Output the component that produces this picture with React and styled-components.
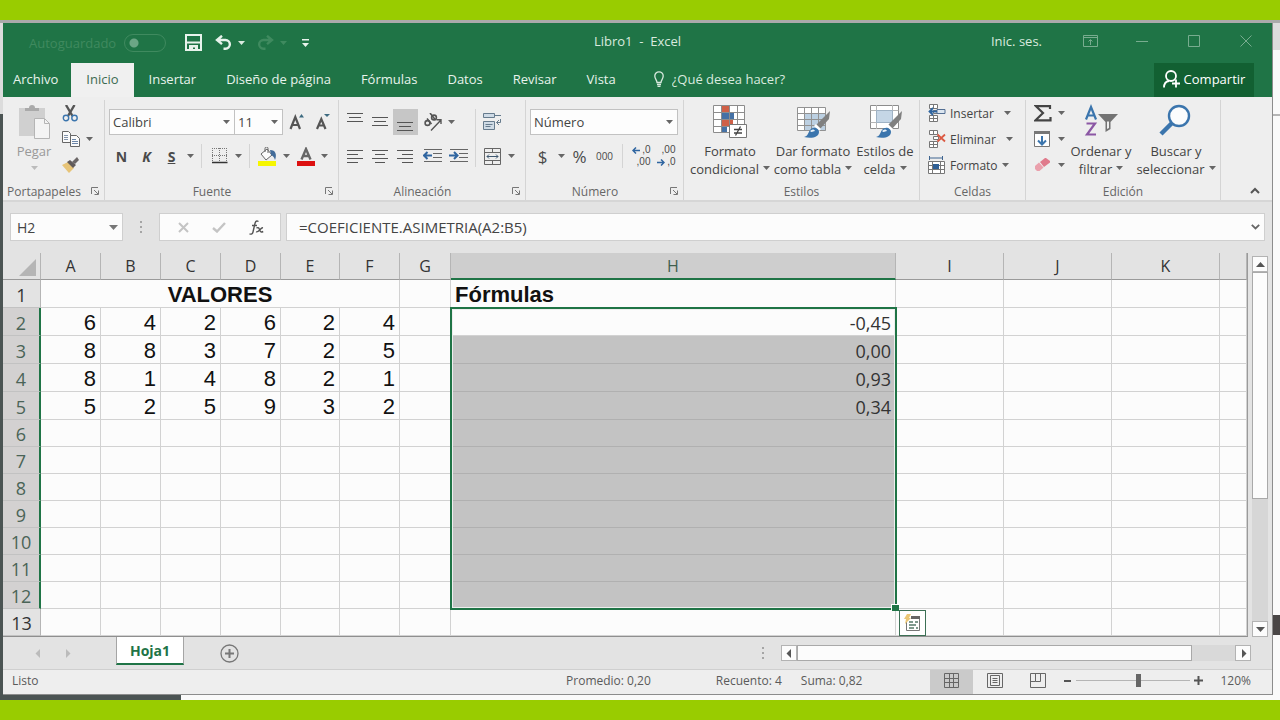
import React, { useState } from "react";
import styled, { createGlobalStyle, css } from "styled-components";

const ui = `"Open Sans", "Noto Sans", sans-serif`;
const green = "#1f7446";
const ink = "#4a4a4a";
const blue = "#3b75ad";

const GlobalStyle = createGlobalStyle`
  * {
    box-sizing: border-box;
  }
  body {
    margin: 0;
    font-family: ${ui};
    font-size: 12px;
    color: #444;
  }
  button, input, select {
    font: inherit;
    color: inherit;
    margin: 0;
    padding: 0;
    border: 0;
    border-radius: 0;
    background: transparent;
    outline: none;
  }
  svg {
    display: block;
    flex: none;
  }
`;

const Screen = styled.div`
  min-height: 100vh;
  display: flex;
  flex-direction: column;
`;
const LimeBar = styled.div`
  height: 20px;
  background: #99cc00;
`;
const Desktop = styled.div`
  flex: 1;
  display: flex;
  padding: 3px 7px 5px 3px;
  background:
    linear-gradient(#4a4646, #4a4646) 100% 595px / 7px 20px no-repeat,
    linear-gradient(#b5b5b5, #b5b5b5) 100% 94px / 7px 2px no-repeat,
    linear-gradient(#aaa, #aaa) 0 0 / 100% 3px no-repeat,
    linear-gradient(#dcdcdc, #dcdcdc) 0 0 / 3px 94px no-repeat,
    linear-gradient(#dcdcdc, #dcdcdc) 100% 0 / 7px 30px no-repeat,
    linear-gradient(#4b5453, #4b5453) 0 0 / 3px 100% no-repeat,
    linear-gradient(#4b5453, #4b5453) 0 100% / 181px 6px no-repeat,
    #fafafa;
`;
const Window = styled.div`
  flex: 1;
  min-width: 0;
  display: flex;
  flex-direction: column;
  background: #e3e3e3;
  border-right: 1px solid #8c8c8c;
  border-bottom: 1px solid #8c8c8c;
`;

/* title bar */
const TitleBar = styled.header`
  display: grid;
  grid-template-columns: 1fr auto 1fr;
  align-items: center;
  height: 40px;
  padding-bottom: 4px;
  background: ${green};
  color: #d9eadf;
  font-size: 13px;
`;
const QuickAccess = styled.div`
  display: flex;
  align-items: center;
  gap: 6px;
  padding: 3px 0 0 26px;
`;
const QuickPair = styled.div`
  display: flex;
`;
const AutoSave = styled.label`
  display: flex;
  align-items: center;
  gap: 8px;
  margin-right: 9px;
  color: #3f8a5f;
`;
const Toggle = styled.input`
  appearance: none;
  width: 42px;
  height: 18px;
  border: 1px solid #3f8a5f;
  border-radius: 9px;
  background: radial-gradient(circle at 9px 8px, #6ba685 4px, transparent 5px);
`;
const QuickButton = styled.button`
  display: flex;
  align-items: center;
  justify-content: center;
  width: ${(p) => p.$w || 24}px;
  height: 24px;
  color: ${(p) => (p.$dim ? "#3f8a5f" : "#e8f3ec")};
`;
const WindowControls = styled.div`
  display: flex;
  align-items: center;
  justify-content: flex-end;
  color: #78ac8f;
`;
const SignIn = styled.button`
  margin-right: 22px;
  color: #d9eadf;
`;
const WindowButton = styled.button`
  display: flex;
  justify-content: center;
  width: 52px;
`;

/* ribbon tabs */
const TabBar = styled.nav`
  display: flex;
  align-items: stretch;
  height: 34px;
  padding-right: 18px;
  background: ${green};
  color: #e8f3ec;
  font-size: 13px;
`;
const Tab = styled.button`
  padding: ${(p) => (p.$file ? "0 13px 2px 10px" : "0 15px 2px")};
  ${(p) =>
    p.$active &&
    css`
      background: #f0f0f0;
      color: #3d6a50;
    `}
`;
const TellMe = styled.label`
  display: flex;
  align-items: center;
  gap: 8px;
  flex: 1;
  padding: 0 0 2px 23px;
  input {
    width: 160px;
  }
  input::placeholder {
    color: #d9eadf;
    opacity: 1;
  }
`;
const ShareButton = styled.button`
  display: flex;
  align-items: center;
  justify-content: center;
  gap: 4px;
  width: 100px;
  padding-bottom: 2px;
  background: #126032;
  color: #fff;
`;

/* ribbon */
const RibbonBar = styled.section`
  display: flex;
  height: 105px;
  padding-top: 3px;
  background: #eee;
  border-bottom: 2px solid #d6d6d6;
`;
const Group = styled.div`
  display: flex;
  flex-direction: column;
  width: ${(p) => p.$w}px;
  border-right: 1px solid #d4d4d4;
`;
const GroupBody = styled.div`
  flex: 1;
  display: flex;
  padding: ${(p) => (p.$tall ? "0 3px" : "9px 4px 0 4px")};
`;
const GroupLabel = styled.div`
  display: grid;
  grid-template-columns: ${(p) => (p.$launcher ? "1fr auto" : "1fr")};
  column-gap: 10px;
  align-items: center;
  justify-items: center;
  height: 18px;
  padding: 0 4px;
  color: #666;
`;
const Rows = styled.div`
  display: flex;
  flex-direction: column;
  gap: ${(p) => (p.$tight ? 0 : 8)}px;
`;
const Row = styled.div`
  display: flex;
  align-items: center;
  height: 26px;
`;
const ToolButton = styled.button`
  display: flex;
  align-items: center;
  justify-content: center;
  flex: none;
  width: ${(p) => p.$w || 25}px;
  height: 26px;
  color: ${ink};
  font-size: ${(p) => p.$size || 14}px;
  font-weight: ${(p) => (p.$bold ? 700 : 400)};
  font-style: ${(p) => (p.$italic ? "italic" : "normal")};
  text-decoration: ${(p) => (p.$underline ? "underline" : "none")};
  background: ${(p) => (p.$on ? "#c6c6c6" : "transparent")};
`;
const Divider = styled.div`
  width: 1px;
  height: ${(p) => p.$h || 24}px;
  margin: 0 ${(p) => p.$gap || 5}px;
  background: #d4d4d4;
`;
const Combo = styled.div`
  display: flex;
  align-items: center;
  width: ${(p) => p.$w}px;
  height: 26px;
  padding-right: 4px;
  margin-right: ${(p) => p.$join || 0}px;
  background: #fdfdfd;
  border: 1px solid #c2c2c2;
  select {
    appearance: none;
    flex: 1;
    min-width: 0;
    height: 24px;
    padding-left: 3px;
    font-size: 13px;
  }
`;
const BigButton = styled.button`
  display: flex;
  flex-direction: column;
  align-items: center;
  flex: none;
  width: ${(p) => p.$w}px;
  padding-top: 4px;
  font-size: 13px;
  line-height: 18px;
  color: ${(p) => (p.$dim ? "#999" : "#444")};
  svg:first-child {
    margin-bottom: 3px;
  }
  span {
    display: flex;
    align-items: center;
    justify-content: center;
    gap: 4px;
    min-height: 18px;
    white-space: nowrap;
  }
`;
const CellButton = styled.button`
  display: flex;
  align-items: center;
  gap: 4px;
  height: 26px;
  padding-left: 5px;
  svg:last-child {
    margin-left: ${(p) => p.$caret || 0}px;
  }
`;
const Collapse = styled.button`
  align-self: flex-end;
  margin: 0 12px 6px auto;
`;

/* formula bar */
const FormulaBar = styled.section`
  display: flex;
  height: 28px;
  margin: 11px 7px 12px 7px;
`;
const Box = styled.div`
  display: flex;
  align-items: center;
  flex: ${(p) => (p.$w ? "none" : 1)};
  width: ${(p) => (p.$w ? p.$w + "px" : "auto")};
  padding: 0 4px 0 6px;
  margin-right: ${(p) => p.$gap || 0}px;
  background: #fcfcfc;
  border: 1px solid #cfcfcf;
  justify-content: ${(p) => (p.$spread ? "space-around" : "flex-start")};
`;
const NameInput = styled.input`
  flex: 1;
  min-width: 0;
  font-size: 14px;
`;
const FormulaInput = styled.input`
  flex: 1;
  min-width: 0;
  padding-left: 6px;
  font-size: 15px;
`;
const Dots = styled.div`
  display: flex;
  align-items: center;
  justify-content: center;
  width: ${(p) => p.$w}px;
`;

/* sheet */
const SheetArea = styled.main`
  display: flex;
  align-items: stretch;
`;
const Sheet = styled.div`
  flex: 1;
  min-width: 0;
  border-right: 1px solid #9a9a9a;
  border-bottom: 1px solid #8f8f8f;
  overflow: hidden;
`;
const Grid = styled.table`
  width: 100%;
  table-layout: fixed;
  border-collapse: separate;
  border-spacing: 0;
  background: #fcfcfc;
`;
const ColHead = styled.th`
  height: 27px;
  padding: 0;
  font-size: 16px;
  line-height: 24px;
  font-weight: 400;
  color: ${(p) => (p.$on ? "#3f5f4e" : "#333")};
  background: ${(p) => (p.$on ? "#cecece" : "#e3e3e3")};
  border-right: 1px solid #b5b5b5;
  border-bottom: ${(p) => (p.$on ? "2px solid " + green : "1px solid #9a9a9a")};
  svg {
    margin: 2px 4px 0 auto;
  }
`;
const RowHead = styled.th`
  height: ${(p) => p.$h}px;
  padding: 2px 0 0;
  font-size: 18px;
  line-height: 24px;
  font-weight: 400;
  color: ${(p) => (p.$on ? "#4a6457" : "#333")};
  background: ${(p) => (p.$on ? "#d3d1d1" : "#e3e3e3")};
  border-right: ${(p) => (p.$on ? "2px solid " + green : "1px solid #b5b5b5")};
  border-bottom: 1px solid #c2c2c2;
`;
const Cell = styled.td`
  position: ${(p) => (p.$anchor ? "relative" : "static")};
  padding: 2px 4px 0;
  font-family: "Liberation Sans", Arial, sans-serif;
  font-size: 22px;
  line-height: 24px;
  color: #111;
  text-align: right;
  border-right: 1px solid #d2d2d2;
  border-bottom: 1px solid #d2d2d2;
  ${(p) =>
    p.$title &&
    css`
      font-weight: 700;
      text-align: ${p.$title};
    `}
  ${(p) =>
    p.$result &&
    css`
      font-family: ${ui};
      font-size: 18px;
      color: #333;
      padding: 2px 4px 0 0;
    `}
  ${(p) =>
    p.$shade &&
    css`
      background: #c3c3c3;
      border-bottom-color: #b0b0b0;
    `}
`;
const Selection = styled.div`
  position: absolute;
  z-index: 1;
  top: -1px;
  left: -1px;
  right: -2px;
  height: 303px;
  border: 2px solid ${green};
  box-shadow: inset 0 0 0 1px #eee;
  pointer-events: none;
  &::after {
    content: "";
    position: absolute;
    right: -4px;
    bottom: -3px;
    width: 7px;
    height: 6px;
    background: ${green};
    border: 1px solid #fff;
    border-width: 1px 0 0 1px;
  }
`;
const QuickAnalysis = styled.button`
  position: absolute;
  z-index: 2;
  left: 3px;
  top: 1px;
  display: flex;
  align-items: center;
  justify-content: center;
  width: 27px;
  height: 26px;
  background: #fff;
  border: 1px solid #3c7055;
`;
const VScroll = styled.div`
  display: flex;
  flex-direction: column;
  width: 16px;
  margin: 3px 4px 0;
  background: #d6d6d6;
`;
const ScrollButton = styled.button`
  display: flex;
  align-items: center;
  justify-content: center;
  width: 16px;
  height: 16px;
  background: #fcfcfc;
  border: 1px solid #b3b3b3;
`;
const VThumb = styled.div`
  flex: 227;
  background: #fcfcfc;
  border: 1px solid #a9a9a9;
`;
const Track = styled.div`
  flex: ${(p) => p.$grow};
`;

/* sheet tabs and status */
const SheetTabs = styled.div`
  display: flex;
  align-items: center;
  height: 32px;
`;
const SheetNav = styled.div`
  display: flex;
  align-items: center;
  justify-content: space-between;
  width: 38px;
  margin: 0 44px 0 31px;
`;
const SheetTab = styled.button`
  align-self: flex-start;
  width: 68px;
  height: 28px;
  font-size: 14px;
  font-weight: 700;
  color: #217346;
  background: #fff;
  border: 1px solid #a5a5a5;
  border-top: 0;
  border-bottom: 2px solid ${green};
`;
const AddSheet = styled.button`
  margin: 0 auto 0 36px;
`;
const HScroll = styled.div`
  display: flex;
  width: 37%;
  height: 16px;
  margin-right: 21px;
  background: #d9d9d9;
`;
const HThumb = styled.div`
  flex: 392;
  background: #fcfcfc;
  border: 1px solid #a9a9a9;
`;
const StatusBar = styled.footer`
  display: flex;
  flex: 1;
  align-items: center;
  min-height: 25px;
  padding: 0 21px 0 9px;
  background: #eee;
  border-top: 1px solid #cfcfcf;
  color: #5a5a5a;
  > span,
  > div:not(:last-of-type) > span {
    padding-bottom: 3px;
  }
`;
const Stats = styled.div`
  display: flex;
  gap: ${(p) => p.$gap}px;
  margin-left: ${(p) => (p.$push ? "auto" : "19px")};
`;
const Views = styled.div`
  display: flex;
  align-self: stretch;
  margin-left: 68px;
`;
const ViewButton = styled.button`
  display: flex;
  align-items: center;
  justify-content: center;
  width: 43px;
  padding-bottom: 3px;
  background: ${(p) => (p.$on ? "#cacaca" : "transparent")};
`;
const ZoomControl = styled.div`
  display: flex;
  align-items: center;
  gap: 4px;
  margin: 0 17px 0 5px;
  padding-bottom: 3px;
`;
const ZoomSlider = styled.input`
  appearance: none;
  width: 114px;
  height: 14px;
  background: linear-gradient(#b5b5b5, #b5b5b5) center / 100% 1px no-repeat;
  &::-webkit-slider-thumb {
    appearance: none;
    width: 5px;
    height: 13px;
    background: #666;
  }
`;

const Caret = ({ color = "#666" }) => (
  <svg width="7" height="4" viewBox="0 0 7 4">
    <path d="M0 0h7L3.500 4z" fill={color} />
  </svg>
);
const Arrow = ({ dir, color = "#555" }) => {
  const shapes = {
    up: "M0 7L4.500 2 9 7z",
    down: "M0 2h9L4.500 7z",
    left: "M6 0v9L1.500 4.500z",
    right: "M3 0v9L7.500 4.500z",
  };
  return (
    <svg width="9" height="9" viewBox="0 0 9 9">
      <path d={shapes[dir]} fill={color} />
    </svg>
  );
};
const Launcher = ({ label }) => (
  <button aria-label={label}>
    <svg width="9" height="9" viewBox="0 0 9 9" fill="none" stroke="#777">
      <path d="M.5 7V.5H7M3 3l4 4M7.500 3.500v4h-4" />
    </svg>
  </button>
);
const Lines = ({ rows, color = "#555" }) => (
  <svg width="17" height="18" viewBox="0 0 17 18" stroke={color}>
    {rows.map(([x, y, w]) => (
      <path key={y} d={`M${x} ${y + 0.5}h${w}`} />
    ))}
  </svg>
);
const alignIcons = {
  top: [[0, 0, 16], [2, 4, 12], [0, 8, 16]],
  middle: [[0, 4, 16], [2, 8, 12], [0, 12, 16]],
  bottom: [[0, 9, 16], [2, 13, 12], [0, 17, 16]],
  left: [[0, 3, 16], [0, 7, 11], [0, 11, 16], [0, 15, 11]],
  center: [[0, 3, 16], [3, 7, 10], [0, 11, 16], [3, 15, 10]],
  right: [[0, 3, 16], [5, 7, 11], [0, 11, 16], [5, 15, 11]],
};

const SaveIcon = () => (
  <svg width="17" height="17" viewBox="0 0 17 17" fill="none" stroke="currentColor" strokeWidth="2">
    <path d="M1 1h15v15H1zM2 8.500h13" />
    <path d="M4 11h9v5h-3v-2.500H8V16H4z" fill="currentColor" stroke="none" />
  </svg>
);
const UndoIcon = ({ flip }) => (
  <svg width="17" height="15" viewBox="0 0 17 15" fill="none" stroke="currentColor" strokeWidth="2.400">
    <g transform={flip ? "matrix(-1 0 0 1 17 0)" : undefined}>
      <path d="M7 .8L2 5l5 4.200M2 5h8.500a4.300 4.300 0 0 1 0 8.700H8.500" />
    </g>
  </svg>
);
const PasteIcon = () => (
  <svg width="34" height="35" viewBox="0 0 34 35">
    <rect x="2" y="4" width="26" height="28" fill="#d0d0d0" />
    <path d="M8 7V4h4a3 3 0 0 1 6 0h4v3z" fill="#aaa" />
    <path d="M17.500 14.500h10l5 5v15h-15z" fill="#f4f4f4" stroke="#b5b5b5" />
    <path d="M27.500 14.500v5h5" fill="none" stroke="#b5b5b5" />
  </svg>
);
const CutIcon = () => (
  <svg width="17" height="17" viewBox="0 0 17 17" fill="none">
    <path d="M4 0l6.500 11M12.500 0L6 11" stroke="#555" strokeWidth="2.400" />
    <circle cx="4" cy="13" r="2.700" stroke={blue} strokeWidth="1.400" />
    <circle cx="12.500" cy="13" r="2.700" stroke={blue} strokeWidth="1.400" />
  </svg>
);
const CopyIcon = () => (
  <svg width="18" height="16" viewBox="0 0 18 16" fill="#fafafa" stroke="#666">
    <path d="M.5.5h6l2 2v9h-8z" />
    <path d="M2 4.500h4M2 6.500h4M2 8.500h4" stroke="#8293aa" />
    <path d="M8.500 4.500h6l3 3v8h-9z" />
    <path d="M10 8.500h4M10 10.500h6M10 12.500h6" stroke="#6c86a8" />
  </svg>
);
const BrushIcon = () => (
  <svg width="18" height="16" viewBox="0 0 18 16">
    <path d="M0 8l6-3 6 6-5 5z" fill="#e7c478" />
    <path d="M5 5l3-2 6 5-3 3z" fill="#615b5b" />
    <path d="M10 5l5-5 2 3-4 4z" fill="#6b6666" />
  </svg>
);
const GrowFont = ({ down }) => (
  <svg width="16" height="18" viewBox="0 0 16 18">
    <path
      d={down ? "M2 16L6.300 6 10.500 16M3.500 12.500H9" : "M1.500 16L6.300 4 11 16M3 12H9.500"}
      fill="none"
      stroke="#555"
      strokeWidth="2.200"
    />
    <path d={down ? "M9 1h6l-3 3z" : "M10 4.500h5L12.500 1z"} fill="#3d6a80" />
  </svg>
);
const BordersIcon = () => (
  <svg width="16" height="16" viewBox="0 0 16 16" fill="none" stroke="#777">
    <path d="M.5 0v14M7.500 0v14M14.500 0v14M0 .5h15M0 7.500h15" strokeDasharray="1 1" />
    <path d="M0 14.500h15.500" stroke="#333" strokeWidth="1.500" />
  </svg>
);
const FillIcon = () => (
  <svg width="19" height="19" viewBox="0 0 19 19">
    <path d="M3 7l6-5 5 6-6 5z" fill="#fbfbfb" stroke="#666" />
    <path d="M7 5V1.500a1.500 1.500 0 0 1 3 0V6" fill="none" stroke="#666" />
    <path d="M12 3c6 0 7 5 5 10-1-3-2-4-4-5z" fill="#426b99" />
    <path d="M0 14h18v5H0z" fill="#f6f600" />
  </svg>
);
const FontColorIcon = () => (
  <svg width="18" height="19" viewBox="0 0 18 19">
    <path d="M4.500 12.500L9 2l4.500 10.500M6 9h6" fill="none" stroke="#666" strokeWidth="2.400" />
    <path d="M0 14h18v5H0z" fill="#dc1010" />
  </svg>
);
const OrientationIcon = () => (
  <svg width="20" height="18" viewBox="0 0 20 18" fill="none" stroke="#555" strokeWidth="1.600">
    <circle cx="4.500" cy="10" r="2.400" />
    <path d="M4 5.500l4.500 5.500M7 0l5.500 7" />
    <circle cx="11" cy="4.500" r="2.400" />
    <path d="M8 17.500L18 7M13.500 6.800H18V11" strokeWidth="1.400" />
  </svg>
);
const IndentIcon = ({ right }) => (
  <svg width="19" height="16" viewBox="0 0 19 16" fill="none">
    <path d="M1 1.500h18M10 5.500h9M10 9.500h9M1 13.500h18" stroke="#666" />
    <path
      d={right ? "M0 7.500h8M5 4l3.500 3.500L5 11" : "M9 7.500H1M4.500 4L1 7.500 4.500 11"}
      stroke="#2f65a0"
      strokeWidth="2"
    />
  </svg>
);
const WrapIcon = () => (
  <svg width="19" height="18" viewBox="0 0 19 18" fill="#cfdbe6" stroke="#667b8d">
    <path d="M.5.5h11v4H.5zM.5 8.500h11v8H.5z" />
    <path d="M2.500 11.500h7M2.500 13.500h5M12 2.500h6M17.500 6v3.500h-4M16 7l-2.500 2.500L16 12" fill="none" />
  </svg>
);
const MergeIcon = () => (
  <svg width="17" height="17" viewBox="0 0 17 17" fill="none" stroke="#666">
    <path d="M.5.5h16v16H.5zM.5 4.500h16M.5 12.500h16M8.500 0v4M8.500 13v4" />
    <path d="M3 8.500h11M5 6.500l-2 2 2 2M12 6.500l2 2-2 2" stroke="#3f5870" />
  </svg>
);
const Decimals = styled.span`
  display: flex;
  flex-direction: column;
  align-items: flex-end;
  width: 20px;
  font-family: "Liberation Sans", Arial, sans-serif;
  font-size: 10px;
  line-height: 12px;
  span {
    display: flex;
    align-items: center;
    gap: 2px;
  }
`;
const SmallArrow = ({ right }) => (
  <svg width="8" height="7" viewBox="0 0 8 7" fill="none" stroke="#2f65a0" strokeWidth="1.500">
    <path d={right ? "M0 3.500h7M4 .5l3 3-3 3" : "M8 3.500H1M4 .5l-3 3 3 3"} />
  </svg>
);
const TableBase = ({ children }) => (
  <svg width="35" height="35" viewBox="0 0 35 35">
    {children}
  </svg>
);
const CondIcon = () => (
  <TableBase>
    <path d="M.5 1.500h31v27H.5z" fill="#fff" />
    <path d="M9 1h7v7H9zM9 16h11v6H9z" fill="#cf6047" />
    <path d="M9 8h12v7H9zM9 22h5v7H9z" fill="#4571a5" />
    <path d="M.5 1.500h31v27H.5zM.5 8.500h31M.5 15.500h31M.5 22.500h31M8.500 1v28M16.500 1v28M24.500 1v28" fill="none" stroke="#8c8c8c" />
    <path d="M16.500 20.500h17v13h-17z" fill="#fff" stroke="#777" />
    <path d="M21 25.500h8M21 29h8M27.500 22.500l-5 9" stroke="#444" strokeWidth="1.300" />
  </TableBase>
);
const PaintBrush = () => (
  <>
    <path d="M34 7l-1 8-9 10-4-4z" fill="#808080" />
    <path d="M20 20l5 5-2 2-5-5z" fill="#fff" />
    <path d="M8 33c4-1 4-4 6-7 3-4 9-2 9 2 0 5-7 7-15 5z" fill="#3b75ad" />
    <path d="M14 27c2-2 4-2 5 0-2 0-3 2-5 0z" fill="#e9f1f8" />
  </>
);
const TableIcon = () => (
  <TableBase>
    <path d="M1.500 3.500h28v23h-28z" fill="#fff" />
    <path d="M8 9h22v18H8z" fill="#bcd0e2" />
    <path d="M1.500 3.500h28v23h-28zM1.500 9.500h28M1.500 15.500h28M1.500 21.500h28M8.500 3v24M15.500 3v24M22.500 3v24" fill="none" stroke="#929292" />
    <PaintBrush />
  </TableBase>
);
const StylesIcon = () => (
  <TableBase>
    <path d="M2.500 1.500h28v23h-28z" fill="#fff" stroke="#8c8c8c" />
    <path d="M2.500 6.500h28M2.500 18.500h28M8.500 1v24M24.500 1v24" stroke="#b5b5b5" />
    <path d="M8.500 6.500h16v12h-16z" fill="#c5d6e6" stroke="#9fb2c4" />
    <PaintBrush />
  </TableBase>
);
const CellsIcon = ({ kind }) => (
  <svg width="18" height="18" viewBox="0 0 18 18" fill="none" stroke="#777">
    {kind === "format" ? (
      <>
        <path d="M.5 5.500h16v12H.5zM.5 9.500h16M.5 13.500h16M4.500 5v13M12.500 5v13" fill="#fff" />
        <path d="M1.500 0v4M14.500 0v4M2 2h12" stroke="#3f6590" />
        <path d="M5 8h6v5H5z" fill="#2f5f95" stroke="none" />
      </>
    ) : (
      <path d="M1.500.5h8v4h-8zM5.500 0v4M1.500 11.500h8v6h-8zM5.500 11v6M5.500 6.500h5v3h-5zM1.500 14.500h8" fill="#fff" />
    )}
    {kind === "insert" && (
      <>
        <path d="M9 5.500h8v4H9z" fill="#dce6f0" stroke="#536f93" />
        <path d="M9 7.500H1.500M5 4L1.500 7.500 5 11" stroke="#2f65a0" strokeWidth="1.800" />
      </>
    )}
    {kind === "delete" && <path d="M9.500 4.500l7.500 7M17 4.500l-7.500 7" stroke="#db5a43" strokeWidth="1.800" />}
  </svg>
);
const SigmaIcon = () => (
  <svg width="18" height="17" viewBox="0 0 18 17" fill="none" stroke="#444" strokeWidth="2.200">
    <path d="M16 4V1.200H2L9 8l-7.500 7.300H16.500V12" />
  </svg>
);
const FillDownIcon = () => (
  <svg width="17" height="17" viewBox="0 0 17 17" fill="none">
    <path d="M.5.5h15v15H.5z" fill="#fff" stroke="#777" />
    <path d="M0 0h16v3H0z" fill="#777" />
    <path d="M8 5v8M4 9.500L8 13.500l4-4" stroke={blue} strokeWidth="2" />
  </svg>
);
const EraserIcon = () => (
  <svg width="15" height="14" viewBox="0 0 15 14">
    <path d="M0 8l4-3.500 4.500 5L4.500 13H2L0 11z" fill="#eaa0ac" />
    <path d="M5 4l5-4h1l4 3v1.500L9 9z" fill="#e07a8c" />
  </svg>
);
const SortIcon = () => (
  <svg width="35" height="35" viewBox="0 0 35 35" fill="none">
    <path d="M2 15.500L7 3l5 12.500M3.800 11.500h6.400" stroke={blue} strokeWidth="2.200" />
    <path d="M2.500 19.500h8.500L3 30.500h9" stroke="#8b57a4" strokeWidth="2.200" />
    <path d="M14 10h20l-7.500 8v7l-5 3V18z" fill="#737373" />
    <path d="M23 17.500h2V24l-2 1z" fill="#eee" />
  </svg>
);
const SearchIcon = () => (
  <svg width="35" height="35" viewBox="0 0 35 35" fill="none" stroke={blue}>
    <circle cx="20" cy="12" r="10" fill="#fbfcfd" strokeWidth="2.400" />
    <path d="M12.500 19.500L2 30" strokeWidth="4.500" />
  </svg>
);
const PersonIcon = () => (
  <svg width="17" height="18" viewBox="0 0 17 18" fill="none" stroke="#fff" strokeWidth="1.800">
    <circle cx="8" cy="6" r="5" />
    <path d="M1 17.500c0-4 2-6 5-6.500M9 13.500h8M13 9.500v8" />
  </svg>
);
const BulbIcon = () => (
  <svg width="10" height="16" viewBox="0 0 10 16" fill="none" stroke="#d9eadf" strokeWidth="1.300">
    <path d="M3 11.500C3 9 .8 8 .8 5a4.200 4.200 0 0 1 8.400 0C9.200 8 7 9 7 11.500zM3 13.500h4M3.500 15.300h3" />
  </svg>
);

const columns = [
  ["A", 60],
  ["B", 60],
  ["C", 60],
  ["D", 60],
  ["E", 59],
  ["F", 60],
  ["G", 51],
  ["H", 445],
  ["I", 108],
  ["J", 108],
  ["K", 108],
];
const values = {
  2: [6, 4, 2, 6, 2, 4],
  3: [8, 8, 3, 7, 2, 5],
  4: [8, 1, 4, 8, 2, 1],
  5: [5, 2, 5, 9, 3, 2],
};
const results = { 2: "-0,45", 3: "0,00", 4: "0,93", 5: "0,34" };
const tabs = ["Inicio", "Insertar", "Diseño de página", "Fórmulas", "Datos", "Revisar", "Vista"];

const SheetRow = ({ n }) => {
  const selected = n >= 2 && n <= 12;
  const nums = values[n] || ["", "", "", "", "", ""];
  return (
    <tr>
      <RowHead scope="row" $h={n < 6 ? 28 : 27} $on={selected}>
        {n}
      </RowHead>
      {n === 1 ? (
        <Cell colSpan={6} $title="center">
          VALORES
        </Cell>
      ) : (
        nums.map((v, i) => <Cell key={i}>{v}</Cell>)
      )}
      <Cell />
      {n === 1 ? (
        <Cell $title="left">Fórmulas</Cell>
      ) : (
        <Cell $result $anchor={n === 2} $shade={n > 2 && selected}>
          {results[n]}
          {n === 2 && <Selection />}
        </Cell>
      )}
      <Cell $anchor={n === 13}>
        {n === 13 && (
          <QuickAnalysis aria-label="Análisis rápido">
            <svg width="17" height="18" viewBox="0 0 17 18" fill="none">
              <path d="M2.500 8v8.500h13V3" stroke="#777" />
              <path d="M7 2h9v3H7z" fill="#666" />
              <path d="M5 8h4M11 8h3M5 11h7M5 14h5M12 14h2" stroke="#557a6a" strokeWidth="1.500" />
              <path d="M3 0h4L5 4h2L1 10l1-5H0z" fill="#ecc776" />
            </svg>
          </QuickAnalysis>
        )}
      </Cell>
      <Cell />
      <Cell />
      <Cell />
    </tr>
  );
};

const Ribbon = () => (
  <RibbonBar>
    <Group $w={102}>
      <GroupBody $tall>
        <BigButton $w={56} $dim>
          <PasteIcon />
          <span>Pegar</span>
          <span>
            <Caret color="#bbb" />
          </span>
        </BigButton>
        <Rows $tight>
          <Row>
            <ToolButton aria-label="Cortar" $w={17}>
              <CutIcon />
            </ToolButton>
          </Row>
          <Row>
            <ToolButton aria-label="Copiar" $w={17}>
              <CopyIcon />
            </ToolButton>
            <ToolButton aria-label="Opciones de copia" $w={20}>
              <Caret />
            </ToolButton>
          </Row>
          <Row>
            <ToolButton aria-label="Copiar formato" $w={17}>
              <BrushIcon />
            </ToolButton>
          </Row>
        </Rows>
      </GroupBody>
      <GroupLabel $launcher>
        <span>Portapapeles</span>
        <Launcher label="Portapapeles" />
      </GroupLabel>
    </Group>

    <Group $w={234}>
      <GroupBody>
        <Rows>
          <Row>
            <Combo $w={126} $join={-1}>
              <select aria-label="Fuente" defaultValue="Calibri">
                <option>Calibri</option>
              </select>
              <Caret />
            </Combo>
            <Combo $w={49}>
              <select aria-label="Tamaño de fuente" defaultValue="11">
                <option>11</option>
              </select>
              <Caret />
            </Combo>
            <ToolButton aria-label="Aumentar tamaño" $w={27}>
              <GrowFont />
            </ToolButton>
            <ToolButton aria-label="Reducir tamaño">
              <GrowFont down />
            </ToolButton>
          </Row>
          <Row>
            <ToolButton $bold>N</ToolButton>
            <ToolButton $bold $italic>
              K
            </ToolButton>
            <ToolButton $bold $underline>
              S
            </ToolButton>
            <ToolButton aria-label="Subrayado" $w={12}>
              <Caret />
            </ToolButton>
            <Divider />
            <ToolButton aria-label="Bordes">
              <BordersIcon />
            </ToolButton>
            <ToolButton aria-label="Más bordes" $w={12}>
              <Caret />
            </ToolButton>
            <Divider />
            <ToolButton aria-label="Color de relleno">
              <FillIcon />
            </ToolButton>
            <ToolButton aria-label="Más colores de relleno" $w={13}>
              <Caret />
            </ToolButton>
            <ToolButton aria-label="Color de fuente">
              <FontColorIcon />
            </ToolButton>
            <ToolButton aria-label="Más colores de fuente" $w={13}>
              <Caret />
            </ToolButton>
          </Row>
        </Rows>
      </GroupBody>
      <GroupLabel $launcher>
        <span>Fuente</span>
        <Launcher label="Fuente" />
      </GroupLabel>
    </Group>

    <Group $w={187}>
      <GroupBody>
        <Rows>
          <Row>
            <ToolButton aria-label="Alinear arriba">
              <Lines rows={alignIcons.top} />
            </ToolButton>
            <ToolButton aria-label="Alinear en el medio">
              <Lines rows={alignIcons.middle} />
            </ToolButton>
            <ToolButton aria-label="Alinear abajo" $on>
              <Lines rows={alignIcons.bottom} />
            </ToolButton>
            <ToolButton aria-label="Orientación" $w={29}>
              <OrientationIcon />
            </ToolButton>
            <ToolButton aria-label="Más orientación" $w={8}>
              <Caret />
            </ToolButton>
          </Row>
          <Row>
            <ToolButton aria-label="Alinear a la izquierda">
              <Lines rows={alignIcons.left} />
            </ToolButton>
            <ToolButton aria-label="Centrar">
              <Lines rows={alignIcons.center} />
            </ToolButton>
            <ToolButton aria-label="Alinear a la derecha">
              <Lines rows={alignIcons.right} />
            </ToolButton>
            <ToolButton aria-label="Disminuir sangría" $w={29}>
              <IndentIcon />
            </ToolButton>
            <ToolButton aria-label="Aumentar sangría" $w={22}>
              <IndentIcon right />
            </ToolButton>
          </Row>
        </Rows>
        <Divider $h={58} $gap={6} />
        <Rows>
          <Row>
            <ToolButton aria-label="Ajustar texto" $w={20}>
              <WrapIcon />
            </ToolButton>
          </Row>
          <Row>
            <ToolButton aria-label="Combinar y centrar" $w={20}>
              <MergeIcon />
            </ToolButton>
            <ToolButton aria-label="Más opciones de combinar" $w={18}>
              <Caret />
            </ToolButton>
          </Row>
        </Rows>
      </GroupBody>
      <GroupLabel $launcher>
        <span>Alineación</span>
        <Launcher label="Alineación" />
      </GroupLabel>
    </Group>

    <Group $w={158}>
      <GroupBody>
        <Rows>
          <Row>
            <Combo $w={148}>
              <select aria-label="Formato de número" defaultValue="Número">
                <option>Número</option>
              </select>
              <Caret />
            </Combo>
          </Row>
          <Row>
            <ToolButton $size={17}>$</ToolButton>
            <ToolButton aria-label="Formatos de contabilidad" $w={12}>
              <Caret />
            </ToolButton>
            <ToolButton $size={17}>%</ToolButton>
            <ToolButton $size={10}>000</ToolButton>
            <Divider />
            <ToolButton aria-label="Aumentar decimales">
              <Decimals>
                <span>
                  <SmallArrow />
                  ,0
                </span>
                <span>,00</span>
              </Decimals>
            </ToolButton>
            <ToolButton aria-label="Disminuir decimales">
              <Decimals>
                <span>,00</span>
                <span>
                  <SmallArrow right />
                  ,0
                </span>
              </Decimals>
            </ToolButton>
          </Row>
        </Rows>
      </GroupBody>
      <GroupLabel $launcher>
        <span>Número</span>
        <Launcher label="Número" />
      </GroupLabel>
    </Group>

    <Group $w={236}>
      <GroupBody $tall>
        <BigButton $w={86}>
          <CondIcon />
          <span>Formato</span>
          <span>
            condicional <Caret />
          </span>
        </BigButton>
        <BigButton $w={80}>
          <TableIcon />
          <span>Dar formato</span>
          <span>
            como tabla <Caret />
          </span>
        </BigButton>
        <BigButton $w={64}>
          <StylesIcon />
          <span>Estilos de</span>
          <span>
            celda <Caret />
          </span>
        </BigButton>
      </GroupBody>
      <GroupLabel>
        <span>Estilos</span>
      </GroupLabel>
    </Group>

    <Group $w={106}>
      <GroupBody $tall>
        <Rows $tight>
          <CellButton $caret={6}>
            <CellsIcon kind="insert" />
            Insertar
            <Caret />
          </CellButton>
          <CellButton $caret={6}>
            <CellsIcon kind="delete" />
            Eliminar
            <Caret />
          </CellButton>
          <CellButton>
            <CellsIcon kind="format" />
            Formato
            <Caret />
          </CellButton>
        </Rows>
      </GroupBody>
      <GroupLabel>
        <span>Celdas</span>
      </GroupLabel>
    </Group>

    <Group $w={195}>
      <GroupBody $tall>
        <Rows $tight>
          <Row>
            <ToolButton aria-label="Autosuma" $w={27}>
              <SigmaIcon />
            </ToolButton>
            <ToolButton aria-label="Más funciones" $w={10}>
              <Caret />
            </ToolButton>
          </Row>
          <Row>
            <ToolButton aria-label="Rellenar" $w={27}>
              <FillDownIcon />
            </ToolButton>
            <ToolButton aria-label="Más opciones de relleno" $w={10}>
              <Caret />
            </ToolButton>
          </Row>
          <Row>
            <ToolButton aria-label="Borrar" $w={27}>
              <EraserIcon />
            </ToolButton>
            <ToolButton aria-label="Más opciones de borrado" $w={10}>
              <Caret />
            </ToolButton>
          </Row>
        </Rows>
        <BigButton $w={70}>
          <SortIcon />
          <span>Ordenar y</span>
          <span>
            filtrar <Caret />
          </span>
        </BigButton>
        <BigButton $w={80}>
          <SearchIcon />
          <span>Buscar y</span>
          <span>
            seleccionar <Caret />
          </span>
        </BigButton>
      </GroupBody>
      <GroupLabel>
        <span>Edición</span>
      </GroupLabel>
    </Group>
    <Collapse aria-label="Contraer la cinta">
      <svg width="10" height="7" viewBox="0 0 10 7" fill="none" stroke="#555" strokeWidth="2">
        <path d="M1 6l4-4 4 4" />
      </svg>
    </Collapse>
  </RibbonBar>
);

const App = () => {
  const [tab, setTab] = useState("Inicio");
  const [zoom, setZoom] = useState(120);
  const [formula, setFormula] = useState("=COEFICIENTE.ASIMETRIA(A2:B5)");
  const [cell, setCell] = useState("H2");

  return (
    <Screen>
      <GlobalStyle />
      <LimeBar />
      <Desktop>
        <Window>
          <TitleBar>
            <QuickAccess>
              <AutoSave>
                Autoguardado
                <Toggle type="checkbox" disabled />
              </AutoSave>
              <QuickButton aria-label="Guardar">
                <SaveIcon />
              </QuickButton>
              <QuickPair>
                <QuickButton aria-label="Deshacer">
                  <UndoIcon />
                </QuickButton>
                <QuickButton aria-label="Historial" $w={12}>
                  <Caret color="#d9eadf" />
                </QuickButton>
              </QuickPair>
              <QuickPair>
                <QuickButton aria-label="Rehacer" $dim>
                  <UndoIcon flip />
                </QuickButton>
                <QuickButton aria-label="Más rehacer" $w={12} $dim>
                  <Caret color="#3f8a5f" />
                </QuickButton>
              </QuickPair>
              <QuickButton aria-label="Personalizar" $w={20}>
                <svg width="7" height="8" viewBox="0 0 7 8" fill="currentColor">
                  <path d="M0 0h7v1.500H0zM0 4h7L3.500 8z" />
                </svg>
              </QuickButton>
            </QuickAccess>
            <span>Libro1&nbsp; -&nbsp; Excel</span>
            <WindowControls>
              <SignIn>Inic. ses.</SignIn>
              <WindowButton aria-label="Opciones de presentación">
                <svg width="15" height="12" viewBox="0 0 15 12" fill="none" stroke="currentColor">
                  <path d="M.5.5h14v11H.5zM.5 2.500h14M7.500 10V5M5.500 6.500l2-2 2 2" />
                </svg>
              </WindowButton>
              <WindowButton aria-label="Minimizar">
                <svg width="12" height="12" viewBox="0 0 12 12" stroke="currentColor">
                  <path d="M0 6.500h12" />
                </svg>
              </WindowButton>
              <WindowButton aria-label="Maximizar">
                <svg width="12" height="12" viewBox="0 0 12 12" fill="none" stroke="currentColor">
                  <path d="M.5.5h11v11H.5z" />
                </svg>
              </WindowButton>
              <WindowButton aria-label="Cerrar">
                <svg width="12" height="12" viewBox="0 0 12 12" stroke="currentColor">
                  <path d="M.5.5l11 11M11.500.5l-11 11" />
                </svg>
              </WindowButton>
            </WindowControls>
          </TitleBar>

          <TabBar>
            <Tab $file>Archivo</Tab>
            {tabs.map((t) => (
              <Tab key={t} $active={t === tab} onClick={() => setTab(t)}>
                {t}
              </Tab>
            ))}
            <TellMe>
              <BulbIcon />
              <input aria-label="¿Qué desea hacer?" placeholder="¿Qué desea hacer?" />
            </TellMe>
            <ShareButton>
              <PersonIcon />
              Compartir
            </ShareButton>
          </TabBar>

          <Ribbon />

          <FormulaBar>
            <Box $w={113}>
              <NameInput aria-label="Cuadro de nombres" value={cell} onChange={(e) => setCell(e.target.value)} />
              <Arrow dir="down" color="#777" />
            </Box>
            <Dots $w={36}>
              <svg width="2" height="13" viewBox="0 0 2 13" fill="#a5a5a5">
                <path d="M0 0h2v2H0zM0 5h2v2H0zM0 10h2v2H0z" />
              </svg>
            </Dots>
            <Box $w={122} $gap={5} $spread>
              <button aria-label="Cancelar">
                <svg width="11" height="11" viewBox="0 0 11 11" stroke="#c4c4c4" strokeWidth="2">
                  <path d="M1 1l9 9M10 1l-9 9" />
                </svg>
              </button>
              <button aria-label="Introducir">
                <svg width="14" height="11" viewBox="0 0 14 11" fill="none" stroke="#c4c4c4" strokeWidth="2.400">
                  <path d="M1 6l4 3.500L13 1" />
                </svg>
              </button>
              <button aria-label="Insertar función">
                <svg width="15" height="15" viewBox="0 0 15 15" fill="none" stroke="#555" strokeWidth="1.400">
                  <path d="M9.500 1.500C7 0 6.200 2 5.600 5L4 12c-.5 2-1.500 2.500-3.500 1.800M3 5.500h5M7.500 8c2-1 2.500 0 3.200 2s1.500 2.500 3.500 1.500M14 7.800c-2.500-.5-4 5-7 4" />
                </svg>
              </button>
            </Box>
            <Box>
              <FormulaInput
                aria-label="Barra de fórmulas"
                value={formula}
                onChange={(e) => setFormula(e.target.value)}
              />
              <svg width="9" height="6" viewBox="0 0 9 6" fill="none" stroke="#666" strokeWidth="1.800">
                <path d="M.8.800L4.500 4.500 8.200.8" />
              </svg>
            </Box>
          </FormulaBar>

          <SheetArea>
            <Sheet>
              <Grid>
                <colgroup>
                  <col width="38" />
                  {columns.map(([name, w]) => (
                    <col key={name} width={w} />
                  ))}
                  <col />
                </colgroup>
                <thead>
                  <tr>
                    <ColHead aria-label="Seleccionar todo">
                      <svg width="17" height="17" viewBox="0 0 17 17">
                        <path d="M17 0v17H0z" fill="#b5b5b5" />
                      </svg>
                    </ColHead>
                    {columns.map(([name]) => (
                      <ColHead key={name} scope="col" $on={name === "H"}>
                        {name}
                      </ColHead>
                    ))}
                    <ColHead />
                  </tr>
                </thead>
                <tbody>
                  {Array.from({ length: 13 }, (_, i) => (
                    <SheetRow key={i} n={i + 1} />
                  ))}
                </tbody>
              </Grid>
            </Sheet>
            <VScroll>
              <ScrollButton aria-label="Subir">
                <Arrow dir="up" />
              </ScrollButton>
              <VThumb />
              <Track $grow={123} />
              <ScrollButton aria-label="Bajar">
                <Arrow dir="down" />
              </ScrollButton>
            </VScroll>
          </SheetArea>

          <SheetTabs>
            <SheetNav>
              <Arrow dir="left" color="#bbb" />
              <Arrow dir="right" color="#bbb" />
            </SheetNav>
            <SheetTab>Hoja1</SheetTab>
            <AddSheet aria-label="Hoja nueva">
              <svg width="19" height="19" viewBox="0 0 19 19" fill="none" stroke="#777">
                <circle cx="9.500" cy="9.500" r="8.500" strokeWidth="1.300" />
                <path d="M9.500 5v9M5 9.500h9" strokeWidth="2" />
              </svg>
            </AddSheet>
            <Dots $w={36}>
              <svg width="2" height="13" viewBox="0 0 2 13" fill="#a5a5a5">
                <path d="M0 0h2v2H0zM0 5h2v2H0zM0 10h2v2H0z" />
              </svg>
            </Dots>
            <HScroll>
              <ScrollButton aria-label="Izquierda">
                <Arrow dir="left" />
              </ScrollButton>
              <HThumb />
              <Track $grow={43} />
              <ScrollButton aria-label="Derecha">
                <Arrow dir="right" />
              </ScrollButton>
            </HScroll>
          </SheetTabs>

          <StatusBar>
            <span>Listo</span>
            <Stats $gap={65} $push>
              <span>Promedio: 0,20</span>
              <span>Recuento: 4</span>
            </Stats>
            <Stats>
              <span>Suma: 0,82</span>
            </Stats>
            <Views>
              <ViewButton aria-label="Normal" $on>
                <svg width="15" height="15" viewBox="0 0 15 15" fill="none" stroke="#666">
                  <path d="M.5.5h14v14H.5zM.5 5.500h14M.5 9.500h14M5.500 0v15M9.500 0v15" />
                </svg>
              </ViewButton>
              <ViewButton aria-label="Diseño de página">
                <svg width="16" height="15" viewBox="0 0 16 15" fill="none" stroke="#666">
                  <path d="M.5.5h15v14H.5zM3.500 2.500h9v10h-9zM5.500 5.500h5M5.500 7.500h5M5.500 9.500h5" />
                </svg>
              </ViewButton>
              <ViewButton aria-label="Salto de página">
                <svg width="16" height="15" viewBox="0 0 16 15" fill="none" stroke="#666">
                  <path d="M.5.5h15v14H.5zM5.500 0v8.500h5V0M.5 8.500h5" />
                </svg>
              </ViewButton>
            </Views>
            <ZoomControl>
              <button aria-label="Alejar">
                <svg width="8" height="8" viewBox="0 0 8 8" stroke="#555" strokeWidth="2">
                  <path d="M0 4h7" />
                </svg>
              </button>
              <ZoomSlider
                type="range"
                aria-label="Zoom"
                min="10"
                max="210"
                value={zoom}
                onChange={(e) => setZoom(Number(e.target.value))}
              />
              <button aria-label="Acercar">
                <svg width="9" height="9" viewBox="0 0 9 9" stroke="#555" strokeWidth="2">
                  <path d="M0 4.500h9M4.500 0v9" />
                </svg>
              </button>
            </ZoomControl>
            <span>{zoom}%</span>
          </StatusBar>
        </Window>
      </Desktop>
      <LimeBar />
    </Screen>
  );
};

export default App;
